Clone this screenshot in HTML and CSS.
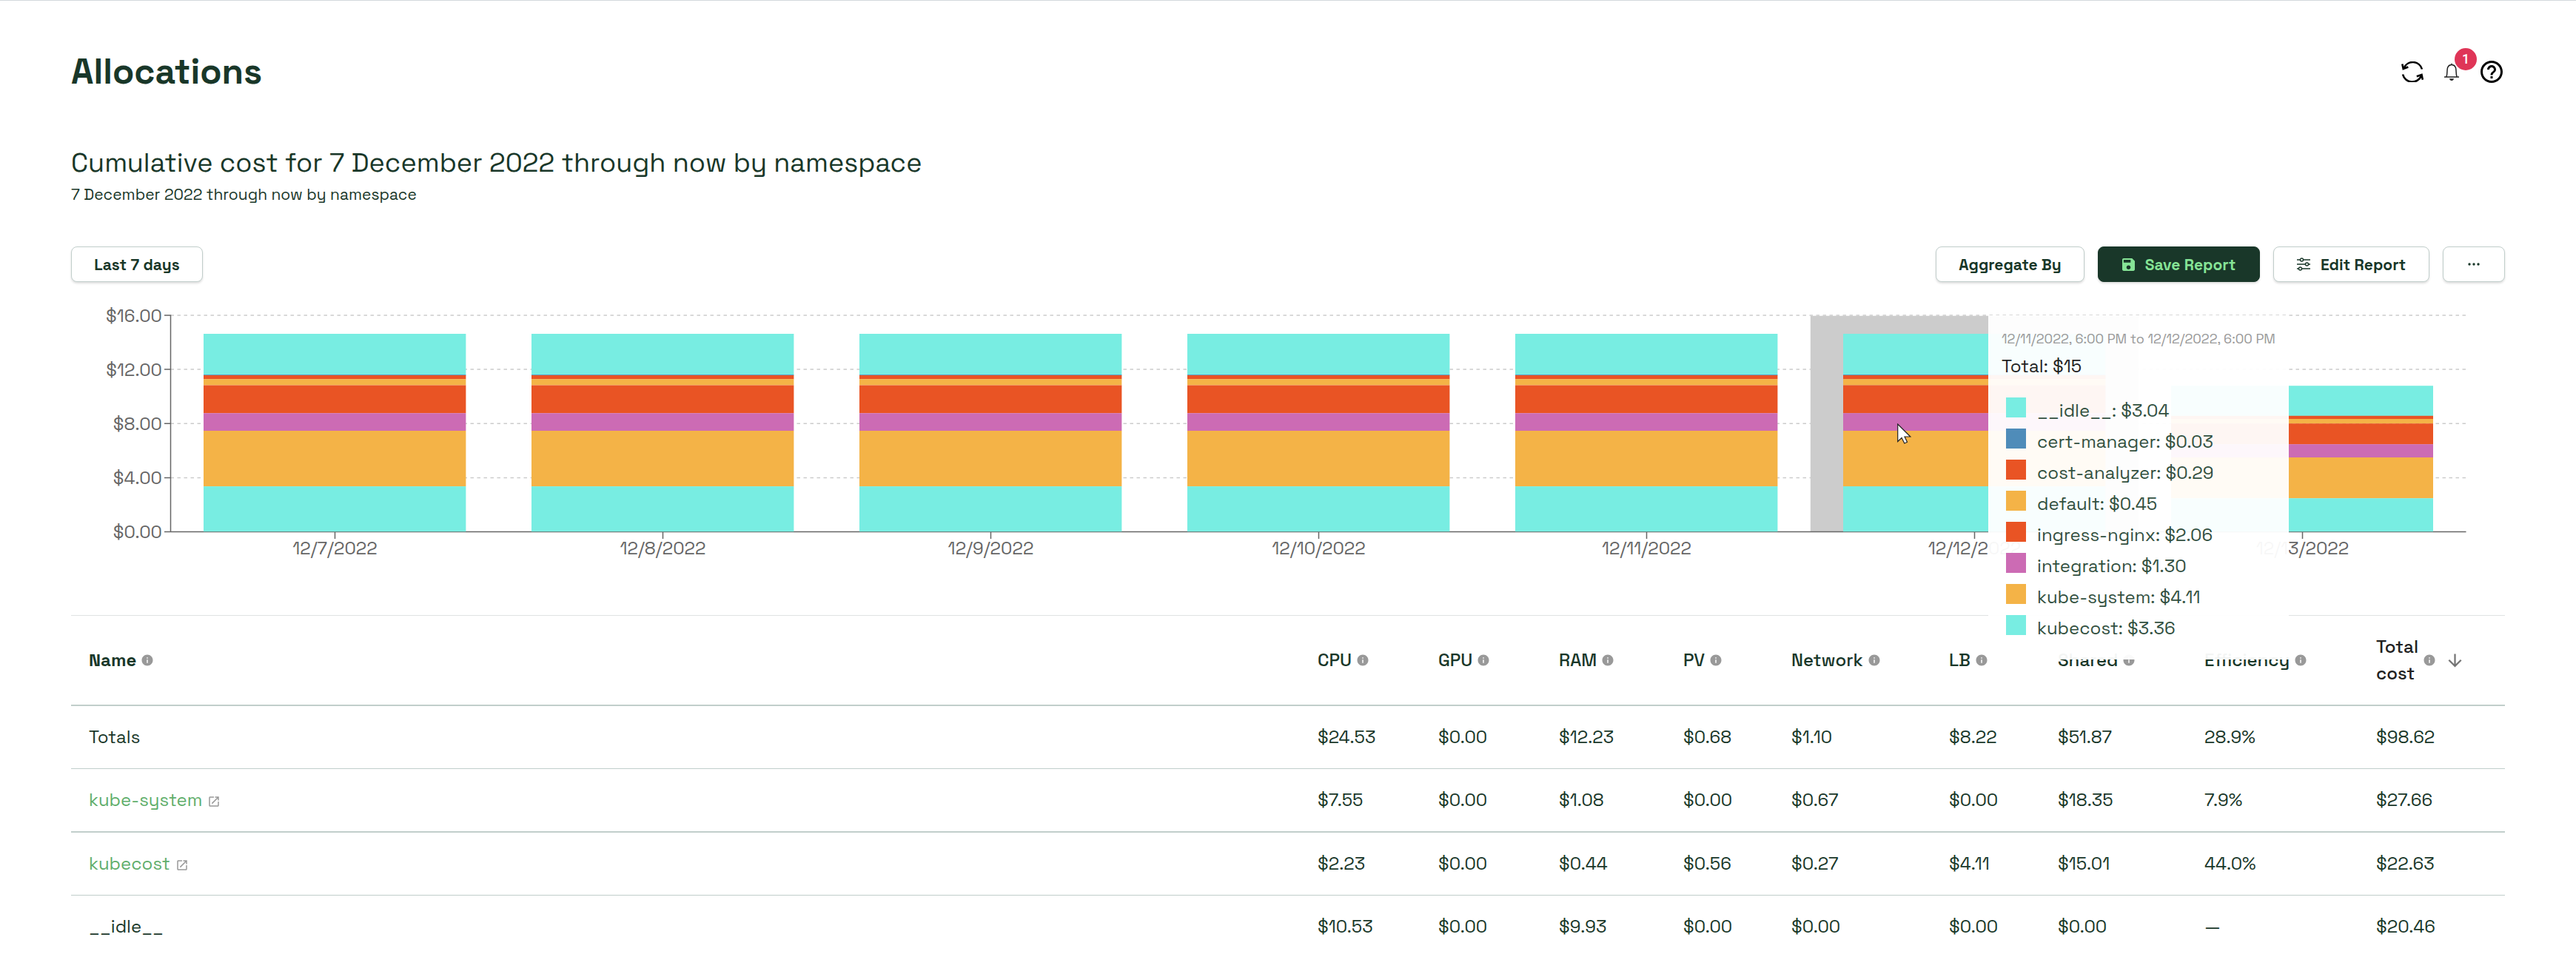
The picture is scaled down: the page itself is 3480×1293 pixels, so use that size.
FILE: index.html
```html
<!DOCTYPE html>
<html lang="en">
<head>
<meta charset="utf-8">
<title>Allocations</title>
<link rel="stylesheet" href="styles.css">
</head>
<body>
<svg width="0" height="0" class="defs">
  <symbol id="info" viewBox="0 0 24 24"><path d="M12 2C6.48 2 2 6.48 2 12s4.48 10 10 10 10-4.480 10-10S17.520 2 12 2zm1 15h-2v-6h2v6zm0-8h-2V7h2v2z"/></symbol>
  <symbol id="open" viewBox="0 0 24 24"><path d="M19 19H5V5h7V3H5c-1.110 0-2 .9-2 2v14c0 1.100.890 2 2 2h14c1.100 0 2-.9 2-2v-7h-2v7zM14 3v2h3.590l-9.830 9.830 1.410 1.410L19 6.410V10h2V3h-7z"/></symbol>
</svg>
<main class="page">
  <header class="top">
    <h1>Allocations</h1>
    <div class="tools">
      <svg class="refresh" viewBox="0 0 30 28"><path d="M3.500 9A13 13 0 0 1 28 10.500M2 17.500A13.200 13.200 0 0 0 27 19.500"/><path d="M1.300 3.500L2.700 10L9.300 7.500M28.900 24.800L27.500 18L20.800 20.300"/></svg>
      <span class="bell">
        <svg viewBox="0 0 20 25"><path d="M0 19H20M3 18.500C4.500 15 3.300 8 5 5.500C6 3.700 8 2.600 10 2.600S14 3.700 15 5.500C16.700 8 15.500 15 17 18.500M10 2.600V.8" fill="none" stroke="#222" stroke-width="1.500"/><path d="M7 21.300H13C12.600 23.200 11.500 24 10 24S7.400 23.200 7 21.300Z" fill="#222"/></svg>
        <span class="badge">1</span>
      </span>
      <svg class="help" viewBox="0 0 24 24"><path d="M11 18h2v-2h-2v2zm1-16C6.480 2 2 6.480 2 12s4.480 10 10 10 10-4.480 10-10S17.520 2 12 2zm0 18c-4.410 0-8-3.590-8-8s3.590-8 8-8 8 3.590 8 8-3.590 8-8 8zm0-14c-2.210 0-4 1.790-4 4h2c0-1.100.9-2 2-2s2 .9 2 2c0 2-3 1.750-3 5h2c0-2.250 3-2.500 3-5 0-2.210-1.790-4-4-4z"/></svg>
    </div>
  </header>
  <h2>Cumulative cost for 7 December 2022 through now by namespace</h2>
  <p class="sub">7 December 2022 through now by namespace</p>
  <div class="actions">
    <button class="btn range">Last 7 days</button>
    <button class="btn agg">Aggregate By</button>
    <button class="btn save"><svg viewBox="3 3 18 18"><path d="M17 3H5c-1.110 0-2 .9-2 2v14c0 1.100.890 2 2 2h14c1.100 0 2-.9 2-2V7l-4-4zm-5 16c-1.660 0-3-1.340-3-3s1.340-3 3-3 3 1.340 3 3-1.340 3-3 3zm3-10H5V5h10v4z"/></svg>Save Report</button>
    <button class="btn edit"><svg viewBox="0 0 18 18"><path d="M0 3H18M0 9H18M0 15H18" stroke="#193729" stroke-width="1.500"/><g fill="#fff" stroke="#193729" stroke-width="1.400"><circle cx="6.500" cy="3" r="2"/><circle cx="13.500" cy="9" r="2"/><circle cx="4.500" cy="15" r="2"/></g></svg>Edit Report</button>
    <button class="btn more"><svg viewBox="0 0 16 4"><circle cx="2" cy="2" r="1.700"/><circle cx="8" cy="2" r="1.700"/><circle cx="14" cy="2" r="1.700"/></svg></button>
  </div>
  <section class="chart">
    <svg class="plot" viewBox="96 405 3288 400">
      <defs>
        <g id="bar">
          <rect width="354.400" height="55.600" y="451" fill="#78ede2"/>
          <rect width="354.400" height="1" y="506.200" fill="#4f8cb9"/>
          <rect width="354.400" height="5.300" y="507" fill="#e95424"/>
          <rect width="354.400" height="8.300" y="512.200" fill="#f4b347"/>
          <rect width="354.400" height="37.700" y="520.500" fill="#e95424"/>
          <rect width="354.400" height="23.800" y="558.200" fill="#cc6bb4"/>
          <rect width="354.400" height="75.100" y="582" fill="#f4b347"/>
          <rect width="354.400" height="61.400" y="657.100" fill="#78ede2"/>
        </g>
      </defs>
      <path class="grid" d="M230.500 426H3331.500M230.500 499.100H3331.500M230.500 572.200H3331.500M230.500 645.400H3331.500"/>
      <rect x="2445.800" y="426.700" width="443" height="291.800" fill="#ccc"/>
      <path class="axis" d="M230.500 425.300V719M222 718.500H3331.500M222 426H230M222 499.100H230M222 572.200H230M222 645.400H230M452.500 719V728M895.500 719V728M1338.500 719V728M1781.500 719V728M2224.500 719V728M2667.500 719V728M3110.500 719V728"/>
      <use href="#bar" x="275"/><use href="#bar" x="718"/><use href="#bar" x="1161"/><use href="#bar" x="1604"/><use href="#bar" x="2047"/><use href="#bar" x="2490"/>
      <g>
        <rect x="2933" width="354" y="521.200" height="41" fill="#78ede2"/>
        <rect x="2933" width="354" y="561.800" height="4.300" fill="#e95424"/>
        <rect x="2933" width="354" y="566" height="6.200" fill="#f4b347"/>
        <rect x="2933" width="354" y="572.200" height="28.200" fill="#e95424"/>
        <rect x="2933" width="354" y="600.200" height="17.800" fill="#cc6bb4"/>
        <rect x="2933" width="354" y="618" height="55.300" fill="#f4b347"/>
        <rect x="2933" width="354" y="673.200" height="45.300" fill="#78ede2"/>
      </g>
      <path d="M275 718.500H3287" stroke="#666" stroke-opacity=".5"/>
      <g class="ylab"><text x="219" y="434.500">$16.00</text><text x="219" y="507.500">$12.00</text><text x="219" y="580.500">$8.00</text><text x="219" y="653.700">$4.00</text><text x="219" y="727">$0.00</text></g>
      <g class="xlab"><text x="452.500" y="748.500">12/7/2022</text><text x="895.500" y="748.500">12/8/2022</text><text x="1338.500" y="748.500">12/9/2022</text><text x="1781.500" y="748.500">12/10/2022</text><text x="2224.500" y="748.500">12/11/2022</text><text x="2667.500" y="748.500">12/12/2022</text><text x="3110.500" y="748.500">12/13/2022</text></g>
    </svg>
    <div class="tooltip">
      <p class="when">12/11/2022, 6:00 PM to 12/12/2022, 6:00 PM</p>
      <p class="total">Total: $15</p>
      <ul>
        <li><i class="aqua"></i>__idle__: $3.04</li>
        <li><i class="blue"></i>cert-manager: $0.03</li>
        <li><i class="red"></i>cost-analyzer: $0.29</li>
        <li><i class="gold"></i>default: $0.45</li>
        <li><i class="red"></i>ingress-nginx: $2.06</li>
        <li><i class="pink"></i>integration: $1.30</li>
        <li><i class="gold"></i>kube-system: $4.11</li>
        <li><i class="aqua"></i>kubecost: $3.36</li>
      </ul>
    </div>
    <svg class="pointer" viewBox="0 0 19 28"><path d="M.7 1V24.500L6 19.500L9.800 27L13.500 25.300L10 18H17.800Z" fill="#fff" stroke="#222" stroke-width="1.200"/></svg>
  </section>
  <section class="table">
    <div class="row head">
      <span>Name<svg class="info"><use href="#info"/></svg></span><span>CPU<svg class="info"><use href="#info"/></svg></span><span>GPU<svg class="info"><use href="#info"/></svg></span><span>RAM<svg class="info"><use href="#info"/></svg></span><span>PV<svg class="info"><use href="#info"/></svg></span><span>Network<svg class="info"><use href="#info"/></svg></span><span>LB<svg class="info"><use href="#info"/></svg></span><span>Shared<svg class="info"><use href="#info"/></svg></span><span>Efficiency<svg class="info"><use href="#info"/></svg></span><span class="sorted"><b>Total cost</b><svg class="info"><use href="#info"/></svg><svg class="arrow" viewBox="0 0 24 24"><path d="M20 12l-1.410-1.410L13 16.170V4h-2v12.170l-5.580-5.590L4 12l8 8 8-8z"/></svg></span>
    </div>
    <div class="row thick"><span>Totals</span><span>$24.53</span><span>$0.00</span><span>$12.23</span><span>$0.68</span><span>$1.10</span><span>$8.22</span><span>$51.87</span><span>28.9%</span><span>$98.62</span></div>
    <div class="row"><span><a>kube-system</a><svg class="open"><use href="#open"/></svg></span><span>$7.55</span><span>$0.00</span><span>$1.08</span><span>$0.00</span><span>$0.67</span><span>$0.00</span><span>$18.35</span><span>7.9%</span><span>$27.66</span></div>
    <div class="row thick"><span><a>kubecost</a><svg class="open"><use href="#open"/></svg></span><span>$2.23</span><span>$0.00</span><span>$0.44</span><span>$0.56</span><span>$0.27</span><span>$4.11</span><span>$15.01</span><span>44.0%</span><span>$22.63</span></div>
    <div class="row"><span>__idle__</span><span>$10.53</span><span>$0.00</span><span>$9.93</span><span>$0.00</span><span>$0.00</span><span>$0.00</span><span>$0.00</span><span>—</span><span>$20.46</span></div>
  </section>
</main>
</body>
</html>
```
FILE: styles.css
```css
* { box-sizing: border-box; }
body {
  margin: 0;
  height: 1293px;
  overflow: hidden;
  background: #fff;
  border-top: 1px solid #d3d8dc;
  color: #193729;
  font-family: "Space Grotesk", Inter, sans-serif;
  font-size: 24px;
}
h1, h2, p, ul { margin: 0; padding: 0; }
svg { display: block; flex: none; }
.defs { position: absolute; }
.page { padding: 0 96px; }

.top { display: flex; justify-content: space-between; height: 192px; }
h1 { padding-top: 65px; font-size: 48px; font-weight: 700; line-height: 61px; }
.tools { display: flex; align-items: flex-start; padding-top: 78px; }
.refresh { width: 30px; height: 28px; margin-top: 4px; fill: none; stroke: #000; stroke-width: 2.6; }
.bell { position: relative; margin: 6px 26px 0 28px; }
.bell svg { width: 20px; height: 25px; }
.badge {
  position: absolute; left: 14px; top: -20px;
  width: 30px; height: 30px; border-radius: 50%;
  background: #df3557; color: #fff;
  font: 500 18px/30px Roboto, sans-serif; text-align: center;
}
.help { width: 36px; height: 36px; }

h2 { font-size: 36px; font-weight: 400; line-height: 54px; height: 54px; }
.sub { font-size: 21px; line-height: 32px; height: 32px; }

.actions { display: flex; gap: 18px; height: 48px; margin-top: 54px; }
.btn {
  display: flex; align-items: center; justify-content: center;
  height: 48px; padding: 0;
  border: 1.5px solid #c1cecb; border-radius: 8px;
  background: #fff; color: #193729;
  box-shadow: 0 2px 3px rgba(0, 0, 0, .13);
  font: 600 21px "Space Grotesk", Inter, sans-serif;
}
.range { width: 178px; margin-right: auto; }
.agg { width: 201px; }
.save { width: 219px; border-color: #193729; background: #193729; color: #86e496; }
.save svg { width: 17px; height: 17px; margin-right: 14px; fill: #86e496; }
.edit { width: 211px; }
.edit svg { width: 18px; height: 18px; margin-right: 14px; }
.more { width: 84px; }
.more svg { width: 16px; height: 4px; fill: #193729; }

.chart { position: relative; height: 450px; padding-top: 24px; }
.plot { width: 3288px; height: 400px; font-size: 24px; }
.grid { stroke: #ccc; stroke-width: 1.5; stroke-dasharray: 4.5 4.5; }
.axis { fill: none; stroke: #666; stroke-width: 1.5; }
.ylab, .xlab { fill: #666; }
.ylab { text-anchor: end; }
.xlab { text-anchor: middle; }

.tooltip {
  position: absolute; left: 2590px; top: 45px;
  width: 406px; height: 465px; padding: 17px 18px;
  background: rgba(255, 255, 255, .95);
}
.when { color: #999; font-size: 18px; line-height: 30px; }
.total { color: #222; line-height: 36px; margin-top: 4px; }
.tooltip ul { list-style: none; padding: 24px 0 0 6px; }
.tooltip li { display: flex; gap: 15px; height: 42px; line-height: 36px; color: #32503f; }
.tooltip i { width: 27px; height: 27px; }
.aqua { background: #78ede2; }
.blue { background: #4f8cb9; }
.red { background: #e95424; }
.gold { background: #f4b347; }
.pink { background: #cc6bb4; }
.pointer { position: absolute; left: 2467px; top: 191px; width: 19px; height: 28px; }

.table { border-top: 1px solid #e0e3e2; }
.row {
  display: grid;
  grid-template-columns: 1660px 163px 163px 168px 146px 213px 147px 198px 232px 198px;
  height: 85px;
  border-top: 1px solid #c1cecb;
}
.row > span { display: flex; align-items: center; padding-left: 24px; line-height: 36px; }
.thick { height: 86px; border-top-width: 2px; }
.head { height: 120px; border: 0; font-weight: 500; }
.head > span:first-child { font-weight: 700; }
.info { width: 18px; height: 18px; margin-left: 6px; fill: #999; }
.sorted { color: #212121; }
.sorted b { width: 57px; font-weight: 500; }
.arrow { width: 27px; height: 27px; margin-left: 12px; fill: #757575; }
a { color: #5fae6b; }
.open { width: 18px; height: 18px; margin: 3px 0 0 7px; fill: #999; }
```
